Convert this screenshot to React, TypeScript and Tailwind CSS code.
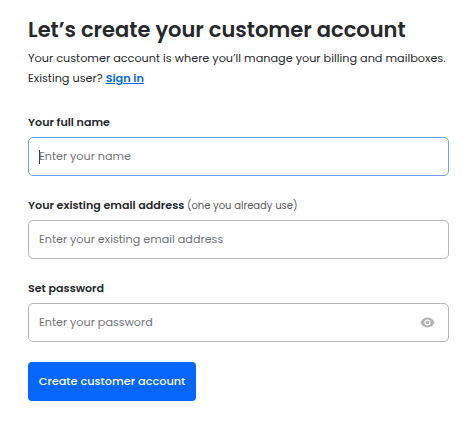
const placeholder = 'text-[11.2px] text-[#6f7377]'

export default function App() {
  return (
    <div className="h-[422px] w-[474px] overflow-hidden bg-white pl-[28px] pr-[25px] pt-[15px] font-['Poppins','Inter','Noto_Sans',sans-serif] text-[#26282b]">
      <h1 className="whitespace-nowrap text-[21px] font-semibold leading-[30px]">Let’s create your customer account</h1>
      <p className="mt-[3px] whitespace-nowrap text-[11.25px] leading-[20px]">
        Your customer account is where you’ll manage your billing and mailboxes.
        <br />
        Existing user? <a className="font-semibold text-[#0a66e8] underline">Sign in</a>
      </p>

      <label className="mt-[25px] block text-[11.1px] font-semibold leading-[18px]">Your full name</label>
      <div className={`mt-[6px] flex h-[39px] items-center rounded-[5px] border border-[#6f9fe8] px-[10px] ${placeholder}`}>
        <span className="-mr-px h-[14px] w-px bg-[#333]" />
        Enter your name
      </div>

      <label className="mt-[20px] block text-[11.1px] font-semibold leading-[18px]">
        Your existing email address <span className="text-[10px] font-normal text-[#55585c]">(one you already use)</span>
      </label>
      <div className={`mt-[5px] flex h-[39px] items-center rounded-[5px] border border-[#b5b5b5] px-[10px] ${placeholder}`}>
        Enter your existing email address
      </div>

      <label className="mt-[20px] block text-[11.1px] font-semibold leading-[18px]">Set password</label>
      <div className={`mt-[6px] flex h-[39px] items-center justify-between rounded-[5px] border border-[#b5b5b5] px-[10px] ${placeholder}`}>
        Enter your password
        <svg className="mr-[3px] h-[11px] w-[15px] text-[#b3b3b3]" viewBox="0 0 24 18" fill="currentColor" aria-hidden="true">
          <path fillRule="evenodd" d="M12 1C6.5 1 2.2 4.4 0.5 9c1.7 4.6 6 8 11.5 8s9.8-3.4 11.5-8C21.8 4.4 17.5 1 12 1Zm0 13a5 5 0 1 1 0-10 5 5 0 0 1 0 10Zm0-8a3 3 0 1 0 0 6 3 3 0 0 0 0-6Z" />
        </svg>
      </div>

      <button className="mt-[20px] h-[39px] w-[168px] rounded-[4px] bg-[#0566fb] text-[11.3px] font-medium text-white" type="button">
        Create customer account
      </button>
    </div>
  )
}
